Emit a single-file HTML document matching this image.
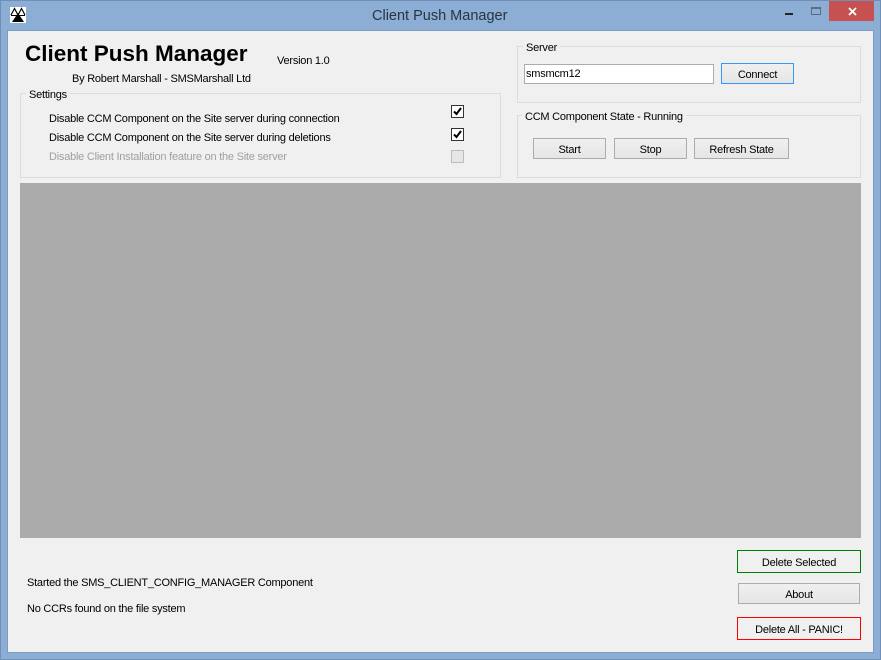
<!DOCTYPE html>
<html><head><meta charset="utf-8"><style>
html,body{margin:0;padding:0;width:881px;height:660px;overflow:hidden;background:#8cadd4}
*{box-sizing:border-box}
body{font-family:"Liberation Sans",sans-serif;font-size:11px;letter-spacing:-.23px;color:#000;position:relative}
.a{position:absolute;white-space:nowrap;line-height:16px}
.g{position:absolute;border:1px solid #dcdcdc}
.l{position:absolute;background:#f0f0f0;padding:0 3px;white-space:nowrap;line-height:16px;height:14px}
.b{position:absolute;border:1px solid #acacac;background:linear-gradient(#f0f0f0,#e5e5e5);text-align:center;white-space:nowrap;line-height:22px}
.c{position:absolute;width:13px;height:13px;border:1px solid #333;background:#fff}
.c svg{position:absolute;left:0;top:0}
</style></head><body>
<div class="a" style="left:0;top:0;width:881px;height:660px;border:1px solid #6f8fb8"></div>
<div class="a" style="left:7px;top:30px;width:867px;height:623px;background:#f0f0f0;border:1px solid #7a9bc4"></div>
<svg class="a" style="left:10px;top:7px" width="16" height="16" viewBox="0 0 16 16"><rect width="16" height="16" fill="#fff"/><path d="M1 8 4.500 1.500 8 8M8 8 11.500 1.500 15 8" fill="none" stroke="#000" stroke-width="1.200"/><path d="M1 8.500H15" stroke="#000"/><path d="M8 6 14 15H2Z" fill="#000"/></svg>
<div class="a" style="left:372px;top:7px;font-size:14.500px;letter-spacing:0;line-height:18px;color:#2a3440">Client Push Manager</div>
<div class="a" style="left:785px;top:13px;width:8px;height:2px;background:#222"></div>
<div class="a" style="left:811px;top:7px;width:10px;height:8px;border:1px solid #5a6d85;border-top-width:2px"></div>
<div class="a" style="left:829px;top:1px;width:45px;height:20px;background:#c75050"></div>
<svg class="a" style="left:848px;top:7px" width="9" height="9" viewBox="0 0 9 9"><path d="M1 1 8 8M8 1 1 8" stroke="#fff" stroke-width="1.800"/></svg>

<div class="a" style="left:25px;top:41px;font-size:22.500px;letter-spacing:0;line-height:26px;font-weight:bold">Client Push Manager</div>
<div class="a" style="left:72px;top:71px">By Robert Marshall - SMSMarshall Ltd</div>
<div class="a" style="left:277px;top:53px">Version 1.0</div>

<div class="g" style="left:20px;top:93px;width:481px;height:85px"></div>
<div class="l" style="left:26px;top:87px">Settings</div>
<div class="a" style="left:49px;top:111px">Disable CCM Component on the Site server during connection</div>
<div class="a" style="left:49px;top:130px">Disable CCM Component on the Site server during deletions</div>
<div class="a" style="left:49px;top:149px;color:#a0a0a0">Disable Client Installation feature on the Site server</div>
<div class="c" style="left:451px;top:105px"><svg width="11" height="11" viewBox="0 0 11 11"><path d="M2 5.500 4.500 8 9 2" fill="none" stroke="#000" stroke-width="2"/></svg></div>
<div class="c" style="left:451px;top:128px"><svg width="11" height="11" viewBox="0 0 11 11"><path d="M2 5.500 4.500 8 9 2" fill="none" stroke="#000" stroke-width="2"/></svg></div>
<div class="c" style="left:451px;top:150px;border-color:#bcbcbc;background:#e6e6e6"></div>

<div class="g" style="left:517px;top:46px;width:344px;height:57px"></div>
<div class="l" style="left:523px;top:40px">Server</div>
<div class="a" style="left:524px;top:64px;width:190px;height:20px;background:#fff;border:1px solid #acacac;padding-left:1px;line-height:19px">smsmcm12</div>
<div class="b" style="left:721px;top:63px;width:73px;height:21px;border-color:#3399ff">Connect</div>

<div class="g" style="left:517px;top:115px;width:344px;height:63px"></div>
<div class="l" style="left:522px;top:109px">CCM Component State - Running</div>
<div class="b" style="left:533px;top:138px;width:73px;height:21px">Start</div>
<div class="b" style="left:614px;top:138px;width:73px;height:21px">Stop</div>
<div class="b" style="left:694px;top:138px;width:95px;height:21px">Refresh State</div>

<div class="a" style="left:20px;top:183px;width:841px;height:355px;background:#ababab"></div>

<div class="a" style="left:27px;top:575px">Started the SMS_CLIENT_CONFIG_MANAGER Component</div>
<div class="a" style="left:27px;top:601px">No CCRs found on the file system</div>

<div class="b" style="left:737px;top:550px;width:124px;height:23px;border-color:#008000;background:#f0f0f0;line-height:24px">Delete Selected</div>
<div class="b" style="left:738px;top:583px;width:122px;height:21px">About</div>
<div class="b" style="left:737px;top:617px;width:124px;height:23px;border-color:#ff0000;background:#f0f0f0;line-height:24px">Delete All - PANIC!</div>
</body></html>
